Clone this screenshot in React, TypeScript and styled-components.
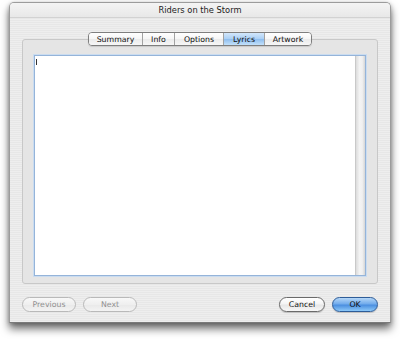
import React from "react";
import styled, { createGlobalStyle } from "styled-components";

const Global = createGlobalStyle`
  html, body { margin: 0; padding: 0; background: #ffffff; }
  body { font-family: "DejaVu Sans", "Lucida Grande", sans-serif; }
`;

const Page = styled.div`
  padding: 2px 9px 0 9px;
  width: 400px;
  height: 339px;
  box-sizing: border-box;
`;

const Window = styled.div`
  width: 382px;
  height: 321px;
  box-sizing: border-box;
  border: 1px solid #9c9c9c;
  border-bottom-color: #7a7a7a;
  border-radius: 5px 5px 0 0;
  background: repeating-linear-gradient(to bottom, #eeeeee 0px, #eeeeee 1px, #e7e7e7 1px, #e7e7e7 2px);
  box-shadow: 0 6px 9px rgba(0, 0, 0, 0.55), 0 1px 4px rgba(0, 0, 0, 0.25);
  display: flex;
  flex-direction: column;
`;

const TitleBar = styled.div`
  height: 14px;
  display: flex;
  align-items: center;
  justify-content: center;
  font-size: 8.3px;
  color: #222;
  border-bottom: 1px solid #d2d2d2;
  border-radius: 4px 4px 0 0;
  background: linear-gradient(to bottom, #f4f4f4, #e8e8e8);
`;

const Body = styled.div`
  padding: 14px 12px 0 12px;
  display: flex;
  flex-direction: column;
`;

const TabBar = styled.div`
  align-self: center;
  display: flex;
  height: 14px;
  margin-bottom: -7px;
  position: relative;
  z-index: 1;
  border: 1px solid #7e7e7e;
  border-radius: 4px;
  overflow: hidden;
  box-sizing: border-box;
  box-shadow: 0 1px 1px rgba(0, 0, 0, 0.12);
`;

const Tab = styled.div<{ $w: number; $active?: boolean }>`
  width: ${(p) => p.$w}px;
  box-sizing: border-box;
  display: flex;
  align-items: center;
  justify-content: center;
  font-size: 7.8px;
  color: #111;
  border-left: 1px solid #a2a2a2;
  &:first-child { border-left: none; }
  background: ${(p) =>
    p.$active
      ? "linear-gradient(to bottom, #d3e7fb 0%, #abd0f5 48%, #8ebdee 52%, #c3e1fb 100%)"
      : "linear-gradient(to bottom, #ffffff 0%, #f6f6f6 48%, #ebebeb 52%, #f7f7f7 100%)"};
`;

const Group = styled.div`
  height: 245px;
  box-sizing: border-box;
  border: 1px solid #c8c8c8;
  border-radius: 3px;
  background: #e5e5e5;
  padding: 15px 11px 7px 11px;
  display: flex;
`;

const TextArea = styled.div`
  flex: 1;
  box-sizing: border-box;
  border: 1px solid #95b4d9;
  box-shadow: 0 0 0 1px #cadcf0;
  background: #ffffff;
  display: flex;
`;

const TextContent = styled.div`
  flex: 1;
  padding: 3px 0 0 1px;
`;

const Caret = styled.div`
  width: 1px;
  height: 6px;
  background: #333;
`;

const Scrollbar = styled.div`
  width: 9px;
  border-left: 1px solid #c9c9c9;
  background: linear-gradient(to right, #dcdcdc, #f4f4f4 40%, #f0f0f0 70%, #d6d6d6);
`;

const ButtonRow = styled.div`
  margin-top: 13px;
  display: flex;
  align-items: center;
  gap: 7px;
`;

const Spacer = styled.div`
  flex: 1;
`;

const Button = styled.div<{ $w: number; $kind: "disabled" | "normal" | "default" }>`
  width: ${(p) => p.$w}px;
  height: 15px;
  box-sizing: border-box;
  border-radius: 8px;
  display: flex;
  align-items: center;
  justify-content: center;
  font-size: 7.8px;
  border: 1px solid
    ${(p) => (p.$kind === "disabled" ? "#b9b9b9" : p.$kind === "default" ? "#2d5c98" : "#6a6a6a")};
  color: ${(p) => (p.$kind === "disabled" ? "#8f8f8f" : "#111")};
  background: ${(p) =>
    p.$kind === "default"
      ? "linear-gradient(to bottom, #b4d6f7 0%, #72acec 45%, #4b8fe0 55%, #8cc8f8 100%)"
      : p.$kind === "disabled"
      ? "linear-gradient(to bottom, #f8f8f8 0%, #efefef 50%, #e9e9e9 52%, #f3f3f3 100%)"
      : "linear-gradient(to bottom, #ffffff 0%, #f4f4f4 48%, #e6e6e6 52%, #f7f7f7 100%)"};
  box-shadow: ${(p) => (p.$kind === "disabled" ? "none" : "0 1px 1px rgba(0,0,0,0.18)")};
`;

const tabs = [
  { label: "Summary", w: 53 },
  { label: "Info", w: 32 },
  { label: "Options", w: 49 },
  { label: "Lyrics", w: 41 },
  { label: "Artwork", w: 47 },
];

export default function App() {
  return (
    <>
      <Global />
      <Page>
        <Window>
          <TitleBar>Riders on the Storm</TitleBar>
          <Body>
            <TabBar>
              {tabs.map((t) => (
                <Tab key={t.label} $w={t.w} $active={t.label === "Lyrics"}>
                  {t.label}
                </Tab>
              ))}
            </TabBar>
            <Group>
              <TextArea>
                <TextContent>
                  <Caret />
                </TextContent>
                <Scrollbar />
              </TextArea>
            </Group>
            <ButtonRow>
              <Button $w={54} $kind="disabled">Previous</Button>
              <Button $w={54} $kind="disabled">Next</Button>
              <Spacer />
              <Button $w={46} $kind="normal">Cancel</Button>
              <Button $w={46} $kind="default">OK</Button>
            </ButtonRow>
          </Body>
        </Window>
      </Page>
    </>
  );
}
